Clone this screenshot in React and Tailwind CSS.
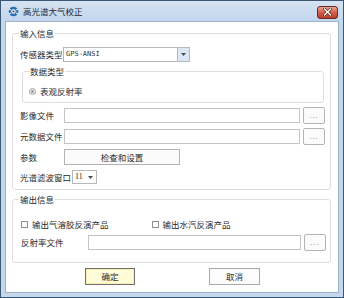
import React from "react";

const FONT = { fontFamily: '"Noto Sans CJK SC", "Noto Sans", sans-serif' };

const Group = ({ title, className, children }) => (
  <div className={`relative rounded-[3px] border border-[#dedede] ${className}`}>
    {/* legend sits over the top border */}
    <span className="absolute -top-[7px] left-[6px] bg-white px-[1px] leading-[12px]">
      {title}
    </span>
    {children}
  </div>
);

const Input = ({ className }) => (
  <div className={`h-[15px] border border-[#c4c4c4] bg-white ${className}`} />
);

const BrowseBtn = () => (
  <button className="flex h-[17px] w-[22px] items-center justify-center rounded-[2px] border border-[#b4b4b4] bg-[#fbfbfb] text-[7px] leading-none tracking-[1px] text-[#9a9a9a]">
    ...
  </button>
);

const Check = () => (
  <span className="inline-block h-[7px] w-[7px] border border-[#8f8f8f] bg-white" />
);

export default function App() {
  return (
    <div
      className="flex h-[298px] w-[344px] flex-col border border-[#3b5775] bg-[#c4d8ee] text-[8.5px] text-[#2a2a2a]"
      style={FONT}
    >
      {/* title bar */}
      <div className="flex h-[20px] shrink-0 items-center bg-gradient-to-b from-[#d5e3f2] to-[#c2d6ec] pl-[7px] pr-[5px]">
        <svg width="11" height="11" viewBox="0 0 11 11" className="mt-[1px]">
          <circle cx="5.5" cy="5.5" r="4.8" fill="#2f6fb8" />
          <circle cx="5.5" cy="5.5" r="2.2" fill="#ffffff" />
          <circle cx="5.5" cy="5.5" r="1.1" fill="#1d4f8c" />
          <path d="M1 3 L3 4 M10 3 L8 4 M1 8 L3 7 M10 8 L8 7" stroke="#ffffff" strokeWidth="1" />
        </svg>
        <span className="ml-[4px] mt-[1px] text-[8.5px] text-[#1f2a36]">高光谱大气校正</span>
        <div className="ml-auto mt-[2px] flex h-[13px] w-[21px] items-center justify-center rounded-[3px] border border-[#6b2a22] bg-gradient-to-b from-[#e7a496] via-[#d0604c] to-[#b8402d]">
          <svg width="9" height="8" viewBox="0 0 9 8">
            <path d="M1.5 1 L7.5 7 M7.5 1 L1.5 7" stroke="#4a1a14" strokeWidth="2.6" strokeLinecap="square" />
            <path d="M1.5 1 L7.5 7 M7.5 1 L1.5 7" stroke="#ffffff" strokeWidth="1.4" strokeLinecap="square" />
          </svg>
        </div>
      </div>

      {/* client area */}
      <div className="mx-[4px] mb-[4px] flex flex-1 flex-col border border-[#9db2c9] bg-white px-[6px] pt-[11px]">
        <Group title="输入信息" className="h-[157px] w-[319px] pl-[7px] pt-[13px]">
          <div className="flex h-[15px] items-center">
            <span className="w-[43px]">传感器类型</span>
            <div className="flex h-[15px] w-[127px] items-center border border-[#b8b8b8] bg-white">
              <span
                className="flex-1 pl-[2px] text-[7px] text-[#333]"
                style={{ fontFamily: '"DejaVu Sans Mono", monospace' }}
              >
                GPS-ANSI
              </span>
              <span className="flex h-full w-[12px] items-center justify-center border-l border-[#a9bdd6] bg-[#dce7f5]">
                <svg width="5" height="3" viewBox="0 0 5 3">
                  <path d="M0 0 H5 L2.5 3 Z" fill="#4d4d4d" />
                </svg>
              </span>
            </div>
          </div>

          <Group title="数据类型" className="ml-[2px] mt-[9px] h-[32px] w-[302px] pl-[6px] pt-[14px]">
            <div className="flex items-center">
              <span className="flex h-[7px] w-[7px] items-center justify-center rounded-full border border-[#a0a0a0] bg-[#f2f2f2]">
                <span className="h-[3px] w-[3px] rounded-full bg-[#9a9a9a]" />
              </span>
              <span className="ml-[4px] leading-[10px]">表观反射率</span>
            </div>
          </Group>

          <div className="mt-[4px] flex h-[17px] items-center">
            <span className="w-[44px]">影像文件</span>
            <Input className="w-[236px]" />
            <span className="ml-[3px]"><BrowseBtn /></span>
          </div>
          <div className="mt-[4px] flex h-[17px] items-center">
            <span className="w-[44px]">元数据文件</span>
            <Input className="w-[236px]" />
            <span className="ml-[3px]"><BrowseBtn /></span>
          </div>
          <div className="mt-[4px] flex h-[16px] items-center">
            <span className="w-[44px]">参数</span>
            <button className="h-[16px] w-[116px] border border-[#b4b4b4] bg-[#fbfbfb] text-[8.5px] leading-none">
              检查和设置
            </button>
          </div>
          <div className="mt-[5px] flex h-[14px] items-center">
            <span className="w-[52px]">光谱滤波窗口</span>
            <div className="flex h-[14px] w-[25px] items-center border border-[#b8b8b8] bg-white pl-[2px]">
              <span className="flex-1 text-[8px] leading-none" style={{ fontFamily: '"Liberation Serif", serif' }}>11</span>
              <svg width="5" height="3" viewBox="0 0 5 3" className="mr-[3px]">
                <path d="M0 0 H5 L2.5 3 Z" fill="#4d4d4d" />
              </svg>
            </div>
          </div>
        </Group>

        <Group title="输出信息" className="mt-[9px] h-[64px] w-[319px] pl-[8px] pt-[20px]">
          <div className="flex h-[9px] items-center">
            <Check />
            <span className="ml-[4px]">输出气溶胶反演产品</span>
            <span className="ml-[43px] flex items-center">
              <Check />
              <span className="ml-[4px]">输出水汽反演产品</span>
            </span>
          </div>
          <div className="mt-[5px] flex h-[17px] items-center">
            <span className="w-[67px]">反射率文件</span>
            <Input className="w-[213px]" />
            <span className="ml-[3px]"><BrowseBtn /></span>
          </div>
        </Group>

        <div className="mt-[5px] flex pl-[73px]">
          <button className="h-[17px] w-[50px] border border-[#6f6f6f] bg-[#fdfbd8] text-[8.5px] leading-none shadow-[inset_0_0_0_1px_#f6efb0]">
            确定
          </button>
          <button className="ml-[74px] h-[17px] w-[51px] border border-[#a8a8a8] bg-[#fcfcfc] text-[8.5px] leading-none">
            取消
          </button>
        </div>
      </div>
    </div>
  );
}
